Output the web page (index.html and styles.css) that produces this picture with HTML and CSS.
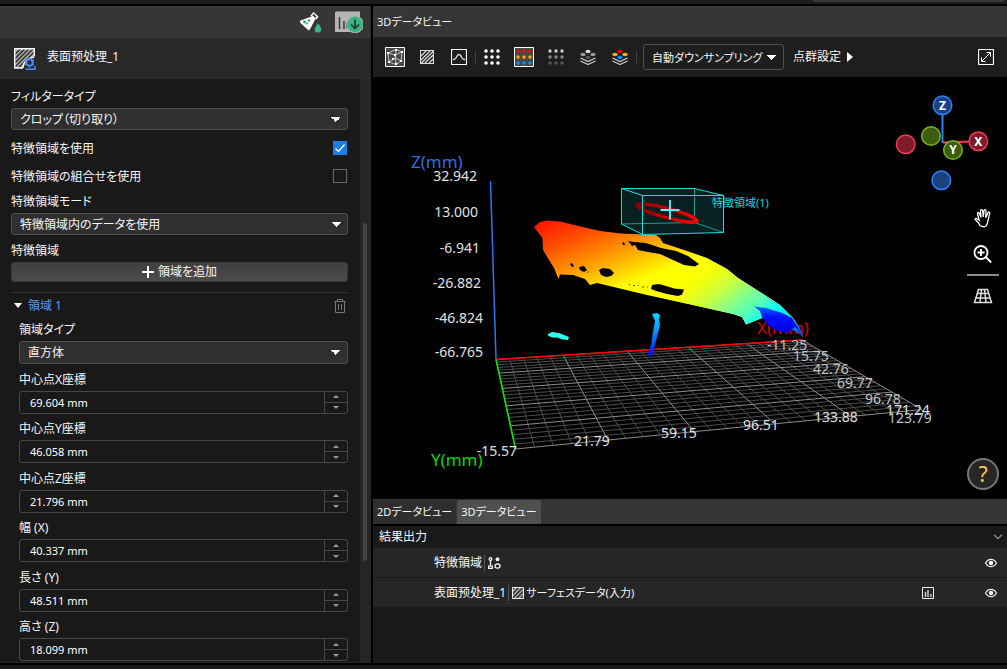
FILE: index.html
```html
<!DOCTYPE html>
<html lang="ja">
<head>
<meta charset="utf-8">
<title>3Dデータビュー</title>
<link rel="stylesheet" href="styles.css">
</head>
<body>
<svg class="defs" aria-hidden="true">
  <defs>
    <pattern id="hatch" width="3" height="3" patternUnits="userSpaceOnUse" patternTransform="rotate(45)"><path d="M.7 0v3" stroke="#e8e8e8" stroke-width="1.100"/></pattern>
    <symbol id="eye" viewBox="0 0 14 12"><path d="M1.500 6Q3.500 2.300 7 2.300T12.500 6Q10.500 9.700 7 9.700T1.500 6Z" fill="none" stroke="#eee" stroke-width="1.200"/><circle cx="7" cy="6" r="2.200" fill="#fff"/></symbol>
  </defs>
</svg>
<div class="app">
  <div class="topstrip"><span class="topstrip-tab"></span></div>
  <main class="main">
    <section class="side">
      <header class="side-head">
        <button class="icon-btn" aria-label="テスト">
          <svg width="24" height="22" viewBox="0 0 24 22"><path d="M12.500 4.500 15.500 1l5 4.500-2 3-1-.800-5.500 10.500-1.500 1.300L2 11.500V9.800L13.500 5.500Z" fill="#fff"/><path d="m15.500 2.800 3 2.700-1 1.500-3-2.500z" fill="#363636"/><circle cx="6.500" cy="11" r="1.400" fill="#2a9f70"/><circle cx="11" cy="9.500" r="1.200" fill="#2a9f70"/><circle cx="9" cy="12.500" r="1" fill="#2a9f70"/><path d="M20 12.500q3.300 4 3.300 5.700a3.300 3.300 0 0 1-6.600 0q0-1.700 3.300-5.700z" fill="#38b888"/></svg>
        </button>
        <button class="icon-btn" aria-label="出力を保存">
          <svg width="28" height="22" viewBox="0 0 28 22"><path d="M0 1.500q0-1 1-1h24V21H0z" fill="#b4b4b4"/><path d="M4.500 6v12M9 10v8M12 12v5" stroke="#363636" stroke-width="1.500"/><circle cx="20" cy="13.500" r="8.700" fill="#b4b4b4"/><circle cx="20" cy="13.500" r="7.900" fill="#39b685"/><path d="M20 8.500v9m-4-4 4 4 4-4" fill="none" stroke="#263c34" stroke-width="1.700"/></svg>
        </button>
      </header>
      <div class="side-title">
        <svg width="22" height="22" viewBox="0 0 22 22"><path d="M1 1h19v8l-8 2-2 9H1z" fill="url(#hatch)"/><path d="M9 20H.700V.700h19.600V8.500M9 20q0-9 11-11" fill="none" stroke="#fff" stroke-width="1.400"/><circle cx="15.500" cy="14.500" r="3.200" fill="#282828" stroke="#4a8cff" stroke-width="2"/><path d="M15.500 9.500v2m0 6v2m-4.300-7.500 1.600 1m5.400 3 1.600 1m0-5-1.600 1m-5.400 3-1.600 1M11.500 21.200H21V18" fill="none" stroke="#4a8cff" stroke-width="1.500"/></svg>
        <h1>表面预处理_1</h1>
      </div>
      <div class="side-body">
        <form class="form">
          <div class="field">
            <label for="ftype">フィルタータイプ</label>
            <select id="ftype"><option>クロップ（切り取り）</option></select>
          </div>
          <div class="checks">
            <div class="check"><label for="useroi">特徴領域を使用</label><input type="checkbox" id="useroi" checked></div>
            <div class="check"><label for="usecombo">特徴領域の組合せを使用</label><input type="checkbox" id="usecombo"></div>
          </div>
          <div class="field">
            <label for="mode">特徴領域モード</label>
            <select id="mode"><option>特徴領域内のデータを使用</option></select>
          </div>
          <div class="field add">
            <span class="caption">特徴領域</span>
            <button type="button" class="add-btn"><svg width="12" height="12" viewBox="0 0 12 12"><path d="M6 0v12M0 6h12" stroke="#fff" stroke-width="2"/></svg>領域を追加</button>
          </div>
          <div class="region-head">
            <button type="button" class="region-toggle"><svg width="8" height="5" viewBox="0 0 8 5"><path d="M0 0h8L4 5z" fill="#fff"/></svg>領域 1</button>
            <button type="button" class="icon-btn" aria-label="削除"><svg width="12" height="14" viewBox="0 0 12 14"><path d="M0 2.500h12M3.500 2.500v-2h5v2M1.500 2.500v11h9v-11M4.500 5v6M7.500 5v6" fill="none" stroke="#777"/></svg></button>
          </div>
          <div class="region">
            <div class="field"><label for="shape">領域タイプ</label><select id="shape"><option>直方体</option></select></div>
            <div class="field"><label for="cx">中心点X座標</label><div class="spin"><input id="cx" value="69.604 mm"><div class="steps"><button type="button" class="up" aria-label="増やす"></button><button type="button" class="down" aria-label="減らす"></button></div></div></div>
            <div class="field"><label for="cy">中心点Y座標</label><div class="spin"><input id="cy" value="46.058 mm"><div class="steps"><button type="button" class="up" aria-label="増やす"></button><button type="button" class="down" aria-label="減らす"></button></div></div></div>
            <div class="field"><label for="cz">中心点Z座標</label><div class="spin"><input id="cz" value="21.796 mm"><div class="steps"><button type="button" class="up" aria-label="増やす"></button><button type="button" class="down" aria-label="減らす"></button></div></div></div>
            <div class="field"><label for="w">幅 (X)</label><div class="spin"><input id="w" value="40.337 mm"><div class="steps"><button type="button" class="up" aria-label="増やす"></button><button type="button" class="down" aria-label="減らす"></button></div></div></div>
            <div class="field"><label for="l">長さ (Y)</label><div class="spin"><input id="l" value="48.511 mm"><div class="steps"><button type="button" class="up" aria-label="増やす"></button><button type="button" class="down" aria-label="減らす"></button></div></div></div>
            <div class="field"><label for="h">高さ (Z)</label><div class="spin"><input id="h" value="18.099 mm"><div class="steps"><button type="button" class="up" aria-label="増やす"></button><button type="button" class="down" aria-label="減らす"></button></div></div></div>
          </div>
        </form>
        <div class="scroll"><span class="thumb"></span></div>
      </div>
    </section>

    <section class="view">
      <h2 class="view-head">3Dデータビュー</h2>
      <div class="toolbar">
        <button class="tool" aria-label="境界ボックス"><svg width="20" height="20" viewBox="0 0 20 20"><path d="M.5.5h19v19H.500z" fill="#484848" stroke="#fff"/><path d="M3 6l8-3.500L17 5l-7 3zM3 6l1 9 7 2.500L10 8M17 5l-1 9-5 3.500M11 2.500 10.500 11 4 15m6.500-4L16 14" fill="none" stroke="#ddd" stroke-width=".8"/><path d="M2 5h2v2H2zM10 2h2v2h-2zM16 4h2v2h-2zM9 7h2v2H9zM3 14h2v2H3zM10 16h2v2h-2zM15 13h2v2h-2zM7 11h2v2H7z" fill="#fff"/></svg></button>
        <button class="tool" aria-label="サーフェス"><svg width="14" height="14" viewBox="0 0 14 14"><path d="M.5.5h13v13H.500zM1 6l5-5M1 10l9-9M1.500 13 13 1.500M5 13l8-8M9 13l4-4" fill="none" stroke="#ddd" stroke-width="1.200"/></svg></button>
        <button class="tool" aria-label="プロファイル"><svg width="16" height="16" viewBox="0 0 16 16"><path d="M.5.5h15v15H.500z" fill="none" stroke="#fff" stroke-width="1.200"/><path d="M2 10.500h1q1.500 0 2.500-2.500T8 5.500t2.500 2.500 2.500 2.500h1" fill="none" stroke="#ddd" stroke-width="1.300"/></svg></button>
        <span class="sep"></span>
        <button class="tool" aria-label="点群 白"><svg width="18" height="18" viewBox="0 0 18 18" fill="none" stroke="#fff" stroke-width="3.600" stroke-linecap="round" stroke-dasharray="0 6"><path d="M3 3h12.100M3 9h12.100M3 15h12.100"/></svg></button>
        <button class="tool" aria-label="点群 高さ"><svg width="20" height="20" viewBox="0 0 20 20" fill="none" stroke-width="3.400" stroke-linecap="round"><path d="M.5.5h19v19H.500z" fill="#484848" stroke="#fff" stroke-width="1" stroke-linecap="butt"/><g stroke-dasharray="0 6"><path d="M4 4h12.100" stroke="#f00"/><path d="M4 10h12.100" stroke="#ffb000"/><path d="M4 16h12.100" stroke="#0094ff"/></g></svg></button>
        <button class="tool" aria-label="点群 輝度"><svg width="18" height="18" viewBox="0 0 18 18" fill="none" stroke-width="3.400" stroke-linecap="round" stroke-dasharray="0 6"><path d="M3 3h12.100" stroke="#ccc"/><path d="M3 9h12.100" stroke="#888"/><path d="M3 15h12.100" stroke="#555"/></svg></button>
        <button class="tool" aria-label="レイヤー 輝度"><svg width="16" height="16" viewBox="0 0 16 16"><path d="m.5 9 7.500 3.500L15.500 9M.500 12 8 15.500 15.500 12" fill="none" stroke="#ccc" stroke-width="1.200"/><ellipse cx="8" cy="2.500" rx="2.500" ry="1.700" fill="#ddd"/><ellipse cx="3" cy="5.500" rx="2.700" ry="1.700" fill="#999"/><ellipse cx="13" cy="5.500" rx="2.700" ry="1.700" fill="#999"/><ellipse cx="8" cy="8.500" rx="2.500" ry="1.700" fill="#555"/></svg></button>
        <button class="tool" aria-label="レイヤー 高さ"><svg width="16" height="16" viewBox="0 0 16 16"><path d="m.5 9 7.500 3.500L15.500 9M.500 12 8 15.500 15.500 12" fill="none" stroke="#ccc" stroke-width="1.200"/><ellipse cx="8" cy="2.500" rx="2.500" ry="1.700" fill="#f00"/><ellipse cx="3" cy="5.500" rx="2.700" ry="1.700" fill="#ffb000"/><ellipse cx="13" cy="5.500" rx="2.700" ry="1.700" fill="#ffb000"/><ellipse cx="8" cy="8.500" rx="2.500" ry="1.700" fill="#0094ff"/></svg></button>
        <span class="sep"></span>
        <select class="sampling" aria-label="サンプリング"><option>自動ダウンサンプリング</option></select>
        <button class="settings">点群設定<svg width="6" height="10" viewBox="0 0 6 10"><path d="M0 0v10l6-5z" fill="#fff"/></svg></button>
        <button class="icon-btn expand" aria-label="拡大"><svg width="16" height="16" viewBox="0 0 16 16"><rect x=".5" y=".5" width="15" height="15" rx="1" fill="none" stroke="#fff" stroke-width="1.200"/><path d="m3.500 12.500 9-9M8.500 3.500h4v4M3.500 8.500v4h4" fill="none" stroke="#fff"/></svg></button>
      </div>

      <div class="canvas">
        <svg class="scene" viewBox="373 77 634 422">
          <defs>
            <linearGradient id="warm" gradientUnits="userSpaceOnUse" x1="547" y1="221" x2="583" y2="309"><stop offset="0" stop-color="#ff1800"/><stop offset=".28" stop-color="#ff5000"/><stop offset=".58" stop-color="#ff9800"/><stop offset=".95" stop-color="#ffff00"/></linearGradient>
            <linearGradient id="cool" gradientUnits="userSpaceOnUse" x1="665" y1="287" x2="743" y2="385"><stop offset="0" stop-color="#ffff00" stop-opacity="0"/><stop offset=".16" stop-color="#f0ff10"/><stop offset=".3" stop-color="#c8ff40"/><stop offset=".46" stop-color="#80ff90"/><stop offset=".58" stop-color="#50ffc0"/><stop offset=".7" stop-color="#00ffff"/><stop offset=".85" stop-color="#00c0ff"/><stop offset=".94" stop-color="#0050ff"/><stop offset="1" stop-color="#0000ff"/></linearGradient>
            <linearGradient id="post" x1="0" y1="0" x2="0" y2="1"><stop offset="0" stop-color="#00d8ff"/><stop offset=".45" stop-color="#0090ff"/><stop offset="1" stop-color="#0000ff"/></linearGradient>
            <linearGradient id="tip" x1="0" y1="0" x2="0" y2="1"><stop offset="0" stop-color="#0068ff"/><stop offset=".4" stop-color="#0010ff"/><stop offset="1" stop-color="#0000e0"/></linearGradient>
            <linearGradient id="ring" x1="0" y1="0" x2="1" y2="0"><stop offset="0" stop-color="#8c0000"/><stop offset=".5" stop-color="#c00000"/><stop offset="1" stop-color="#ff0000"/></linearGradient>
          </defs>
          <path class="grid-minor" id="gridMinor"/>
          <path class="grid-major" id="gridMajor"/>
          <path d="M490.500 181 496 359.500" stroke="#2d74f0" stroke-width="1.500"/>
          <path d="M496 359.500 802 340" stroke="#f00" stroke-width="1.500"/>
          <path d="M496 359.500 515.500 449" stroke="#00e800" stroke-width="1.500"/>
          <g class="axis-name">
            <text x="411" y="168" fill="#2e6fdc">Z(mm)</text>
            <text x="431" y="466" fill="#00d800">Y(mm)</text>
            <text x="757" y="334" fill="#d80000">X(mm)</text>
          </g>
          <g class="tick tick-end">
            <text x="477" y="181">32.942</text><text x="478" y="217">13.000</text><text x="480" y="253">-6.941</text><text x="481" y="288">-26.882</text><text x="483" y="323">-46.824</text><text x="483" y="357">-66.765</text>
            <text x="517" y="456">-15.57</text>
          </g>
          <g class="tick">
            <text x="574" y="446">21.79</text><text x="661" y="438">59.15</text><text x="743" y="430">96.51</text><text x="814" y="422">133.88</text><text x="886" y="415">171.24</text>
          </g>
          <g class="tick tick-far">
            <text x="767" y="350">-11.25</text><text x="793" y="361">15.75</text><text x="813" y="374">42.76</text><text x="837" y="388">69.77</text><text x="865" y="404">96.78</text><text x="888" y="423">123.79</text>
          </g>
          <g id="surface">
            <path d="M534 227 540 222 547 220.500 560 221.500 587 228 600 231 621 233.500 656 235 660 238 663 243 687 251 707 258 727 269 738 278 760 292 780 305 793 318 799 327 803.500 337 797 332 775 320 762 318 746 324.500 742 317 733 314 693 305 647 295 597 283 590 285 585 279 573 275 560 274.500 558.500 279 554 268 543 250 542.500 238Z" fill="url(#warm)"/>
            <path d="M640 236 656 235 660 238 663 243 687 251 707 258 727 269 738 278 760 292 780 305 793 318 799 327 803.500 337 797 332 775 320 762 318 746 324.500 742 317 733 314 693 305 640 293Z" fill="url(#cool)"/>
            <path d="M754 306.500 766 308 781 312.500 792 318 800 331 795 327 788 333 778 331 768 325 762 317 760 311Z" fill="url(#tip)"/>
            <path d="M627 241 634 242 646 243 661 248 676 251 688 256 699 264 695 266.500 684 265 673 260 660 254 648 252 638 250 635 245 632 246 629 242ZM652 285l7-1 7 2 8 2.500 10 1-2 5-4 1.500-11-2-11-3-5-2zM599 270l4-2 7 1 4 4-3 3-5 1-5-2zM579 267l5-1 3 4-3 2-4-2zM570 264l2-1 2 3-2 1zM622 243l2-1 1 3-2 0z" fill="#000"/>
            <path d="M629 284.500h1m3 1h2m3 0h1m3 1.500h2m3 0h1M587 272h2" stroke="#554c00"/>
          </g>
          <path d="m652 314 5-1 3 2-1 5 1 5-3 12-4 16-3 4-2-3 3-9 2-13 2-11z" fill="url(#post)"/>
          <path d="m548 334 4-2 7 1 5 2 5 2-1 3-5-.500-6-2-5 0-4-2z" fill="#28fff0"/>
          <path d="M621.500 188.500h73l29 7v37l-81 2-21-10.500z" fill="#1c8080" fill-opacity=".26"/>
          <path d="m621.500 224 73-1.500 29 10M694.500 188.500v34" fill="none" stroke="#159e9e"/>
          <ellipse cx="667" cy="213" rx="31" ry="4.500" transform="rotate(15 667 213)" fill="none" stroke="url(#ring)" stroke-width="3.500"/>
          <path d="M621.500 188.500h73l29 7h-81zM621.500 188.500V224l21 10.500v-39m0 39 81-2v-37" fill="none" stroke="#18dede"/>
          <path d="M670 200v19.500M660.500 210h19" stroke="#50ffff" stroke-width="1.800"/>
          <text class="roi" x="712" y="207">特徴領域(1)</text>
        </svg>
        <div class="overlay">
          <svg class="gizmo" width="96" height="98" viewBox="894 94 96 98" stroke-width="1.500">
            <path d="M943 142.500 978 141.300" stroke="#ff3c5a" stroke-width="2"/>
            <circle cx="931" cy="136" r="9.300" fill="#3d5c10" stroke="#78b41c"/>
            <path d="M942.500 105v38" stroke="#2f80ff" stroke-width="2"/>
            <circle cx="905.700" cy="144.300" r="9.300" fill="#7f1c2c" stroke="#f23c58"/>
            <circle cx="941.300" cy="180.300" r="9.300" fill="#1b427f" stroke="#2f80ff"/>
            <circle cx="942.500" cy="105.300" r="9.300" fill="#1b427f" stroke="#2f80ff"/>
            <circle cx="978.300" cy="141.300" r="9.300" fill="#7f1c2c" stroke="#f23c58"/>
            <circle cx="953" cy="150" r="9.300" fill="#3d5c10" stroke="#78b41c"/>
            <text x="942.500" y="109.500">Z</text><text x="978.300" y="145.500">X</text><text x="953" y="154">Y</text>
          </svg>
          <div class="tools">
            <button class="tool" aria-label="移動"><svg width="20" height="20" viewBox="0 0 20 20"><path d="M7 17.500 5.500 15 2.200 11.500q-.5-1.300 1-1.200l3 2L4.500 6q-.2-1.400.7-1.500.9 0 1.300 1.300L8 9.500 7.500 3q0-1.400 1-1.400t1.200 1.300l.5 6 .8-6.200q.3-1.200 1.200-1t.8 1.500L12.700 9.700l2.200-5q.5-1 1.300-.6t.4 1.500L15 12.500q-.3 3.500-2 5.500-1.500 1-3.500.7Z" fill="none" stroke="#fff" stroke-width="1.300"/></svg></button>
            <button class="tool" aria-label="ズーム"><svg width="20" height="20" viewBox="0 0 20 20"><circle cx="8" cy="8.500" r="6.500" fill="none" stroke="#fff" stroke-width="1.800"/><path d="M8 5v7M4.500 8.500h7M12.700 13l5.500 5.500" stroke="#fff" stroke-width="1.900"/></svg></button>
            <span class="rule"></span>
            <button class="tool" aria-label="透視投影"><svg width="20" height="16" viewBox="0 0 20 16"><path d="M5.500 1.500h9l4 13h-17zM4.300 5.500h11.400M3 10h14M8.500 1.500 7 14.500M11.500 1.500l1.500 13" fill="none" stroke="#ddd" stroke-width="1.500"/></svg></button>
          </div>
        </div>
        <button class="help">?</button>
      </div>

      <nav class="tabs">
        <button class="tab">2Dデータビュー</button>
        <button class="tab active">3Dデータビュー</button>
      </nav>
      <div class="results">
        <div class="results-head"><span>結果出力</span><svg width="10" height="6" viewBox="0 0 10 6"><path d="m1 .700 4 4 4-4" fill="none" stroke="#999" stroke-width="1.200"/></svg></div>
        <div class="result">
          <span class="src">特徴領域</span>
          <svg width="13" height="12" viewBox="0 0 13 12"><g fill="none" stroke="#fff" stroke-width="1.200"><circle cx="2.500" cy="2" r="1.400"/><path d="M2.500 3.500V9M.700 9h3.600v2.300H.700z"/><ellipse cx="9.500" cy="9" rx="2.600" ry="2.200"/></g><path d="m9.500 0 2.200 2-1 2H8.300l-1-2z" fill="#fff"/></svg>
          <button class="tool end" aria-label="表示"><svg width="14" height="12"><use href="#eye"/></svg></button>
        </div>
        <div class="result">
          <span class="src">表面预处理_1</span>
          <svg width="12" height="12" viewBox="0 0 12 12"><path d="M.5.500h11v11H.500z" fill="url(#hatch)" stroke="#eee"/></svg>
          <span class="name">サーフェスデータ(入力)</span>
          <button class="tool end" aria-label="ヒストグラム"><svg width="12" height="12" viewBox="0 0 12 12"><path d="M.5.500h11v11H.500z" fill="none" stroke="#eee"/><path d="M3.500 5v5M6 3v7M9 7v3" stroke="#ccc" stroke-width="1.500"/></svg></button>
          <button class="tool after" aria-label="表示"><svg width="14" height="12"><use href="#eye"/></svg></button>
        </div>
      </div>
    </section>
  </main>
  <div class="bottomstrip"></div>
</div>
<script src="grid.js"></script>
</body>
</html>
```

FILE: styles.css
```css
* { box-sizing: border-box; }

body {
  margin: 0;
  background: #000;
  color: #f6f6f6;
  font: 12px/18px "Noto Sans", "Noto Sans CJK JP", sans-serif;
  font-feature-settings: "palt";
}

button, select, input { font: inherit; font-feature-settings: inherit; color: inherit; margin: 0; }
button { background: none; border: 0; padding: 0; white-space: nowrap; }
h1, h2 { font-size: 12px; font-weight: 400; margin: 0; }
svg { display: block; flex: none; }
.defs { position: absolute; width: 0; height: 0; }

.app { display: flex; flex-direction: column; height: 100vh; min-height: 600px; gap: 2px; overflow: hidden; }
.topstrip { height: 4px; background: #1b1b1b; display: flex; justify-content: flex-end; padding-right: 3px; }
.topstrip-tab { width: 19%; height: 2px; background: #35353b; }
.bottomstrip { height: 4px; background: #1a1a1a; }
.main { flex: 1; min-height: 0; display: grid; grid-template-columns: minmax(0, 371fr) minmax(0, 634fr); gap: 2px; }

/* parameter panel */
.side { display: flex; flex-direction: column; min-height: 0; background: #191919; border-right: 1px solid #262626; }
.side-head { height: 32px; background: #363636; display: flex; align-items: center; justify-content: flex-end; gap: 13px; padding-right: 7px; }
.side-title { height: 41px; background: #282828; display: flex; align-items: center; gap: 11px; padding-left: 14px; }
.side-title h1 { padding-bottom: 3px; }
.side-body { flex: 1; min-height: 0; display: flex; border-bottom: 1px solid #262626; }
.form { flex: 1; min-width: 0; display: flex; flex-direction: column; padding: 8px 12px 1px 11px; }
.scroll { width: 10px; background: #252525; padding: 144px 3px 0; }
.thumb { display: block; width: 4px; height: 77%; border-radius: 2px; background: #444; }

.field { display: flex; flex-direction: column; gap: 2px; }
label, .caption { padding-top: 1px; }
select {
  appearance: none;
  width: 100%;
  height: 22px;
  padding: 1px 20px 0 8px;
  border: 1px solid #4e4e4e;
  border-radius: 3px;
  background-color: #2f2f2f;
  background-image: linear-gradient(45deg, transparent 50%, #fff 50%), linear-gradient(-45deg, transparent 50%, #fff 50%);
  background-size: 5px 5px;
  background-repeat: no-repeat;
  background-position: right 11px center, right 6px center;
}
.checks { display: flex; flex-direction: column; gap: 10px; padding: 9px 0 7px; }
.check { display: flex; justify-content: space-between; align-items: center; height: 18px; }
.check input { appearance: none; width: 14px; height: 14px; margin-right: 1px; border: 1px solid #6a6a6a; }
.check input:checked {
  border: 0;
  background: #1a7fe0 url("data:image/svg+xml,%3Csvg xmlns='http://www.w3.org/2000/svg' viewBox='0 0 14 14'%3E%3Cpath d='M2.500 7.500 5.500 10.500 11.500 3.500' fill='none' stroke='white' stroke-width='1.300'/%3E%3C/svg%3E");
}
.add { padding-top: 6px; }
.add-btn {
  height: 20px;
  display: flex;
  align-items: center;
  justify-content: center;
  gap: 4px;
  border: 1px solid #3a3a3a;
  border-radius: 3px;
  background: linear-gradient(#3f3f3f, #4b4b4b);
}
.region-head { margin-top: 10px; border-top: 1px solid #303030; padding: 4px 2px 0 3px; height: 22px; display: flex; align-items: center; justify-content: space-between; }
.region-toggle { display: flex; align-items: center; gap: 6px; color: #5c98f0; }
.region { flex: 1; padding: 6px 0 0 8px; display: flex; flex-direction: column; justify-content: space-between; }
.region select { height: 23px; }
.spin { height: 23px; display: flex; border: 1px solid #474747; border-radius: 3px; }
.spin input { flex: 1; min-width: 0; border: 0; outline: 0; background: none; padding: 1px 10px 0; font-size: 11px; color: #fff; }
.steps { width: 23px; display: flex; flex-direction: column; border-left: 1px solid #474747; }
.steps button { flex: 1; display: flex; align-items: center; justify-content: center; }
.steps .up { border-bottom: 1px solid #474747; }
.steps button::before { content: ""; border: 3px solid transparent; border-top: 0; border-bottom: 3px solid #999; }
.steps .down::before { border-bottom: 0; border-top: 3px solid #999; }

/* 3D view */
.view { display: flex; flex-direction: column; min-height: 0; }
.view-head { height: 31px; line-height: 31px; padding-left: 4px; background: #363636; font-size: 11px; }
.toolbar { height: 40px; background: #1e1e1e; display: flex; align-items: center; padding: 0 13px 0 6px; }
.tool { width: 32px; height: 32px; display: flex; align-items: center; justify-content: center; flex: none; }
.sep { width: 1px; height: 12px; background: #444; }
.sampling { width: 141px; height: 26px; margin-left: 6px; padding-right: 16px; font-size: 11px; background-color: #1e1e1e; border-color: #505050; }
.settings { display: flex; align-items: center; gap: 6px; margin-left: 9px; }
.expand { margin-left: auto; }

.canvas { position: relative; flex: 1; min-height: 0; background: #000; }
.scene { width: 100%; height: 100%; }
.grid-minor { fill: none; stroke: #4c4c4c; }
.grid-major { fill: none; stroke: #8c8c8c; }
.axis-name { font-size: 17px; }
.tick { font-size: 14px; fill: #e0e0e0; }
.tick-end { text-anchor: end; }
.tick-far { fill: #c4c4c4; }
.roi { font-size: 11px; fill: #00dede; }
.overlay { position: absolute; top: 17px; right: 8px; display: flex; flex-direction: column; align-items: flex-end; gap: 10px; }
.gizmo { margin-right: 9px; }
.gizmo text { font-size: 12px; font-weight: 700; fill: #fff; stroke: none; text-anchor: middle; }
.tools { display: flex; flex-direction: column; gap: 4px; }
.rule { height: 2px; background: #8c8c8c; }
.help { position: absolute; right: 8px; bottom: 9px; width: 32px; height: 32px; border: 2px solid #777; border-radius: 50%; background: #262626; color: #ffc840; font-size: 21px; line-height: 28px; }

.tabs { height: 25px; background: #353535; display: flex; gap: 1px; padding-top: 1px; }
.tab { padding: 0 4px; font-size: 11px; background: #2e2e2e; border-radius: 3px 3px 0 0; }
.tab.active { background: #505050; }
.results { height: 137px; margin-top: 2px; background: #191919; }
.results-head { height: 22px; padding: 0 4px 0 6px; display: flex; align-items: center; justify-content: space-between; }
.result { height: 30px; display: flex; align-items: center; background: #262626; border-bottom: 1px solid #191919; padding-left: 61px; }
.src { border-right: 1px solid #555; padding-right: 2px; margin-right: 3px; line-height: 16px; }
.name { font-size: 11px; margin-left: 2px; }
.end { margin-left: auto; }
.after { margin-left: 31px; }
```

FILE: grid.js
```js
// Floor grid: maps the unit square onto the floor's perspective quad.
const [x0, y0, x1, y1, x2, y2, x3, y3] = [496, 359.5, 802, 340, 922, 409.5, 515.5, 449];
const dx1 = x1 - x2, dx2 = x3 - x2, sx = x0 - x1 + x2 - x3;
const dy1 = y1 - y2, dy2 = y3 - y2, sy = y0 - y1 + y2 - y3;
const det = dx1 * dy2 - dx2 * dy1;
const g = (sx * dy2 - dx2 * sy) / det;
const h = (dx1 * sy - sx * dy1) / det;
const a = x1 - x0 + g * x1, b = x3 - x0 + h * x3;
const d = y1 - y0 + g * y1, e = y3 - y0 + h * y3;

function project(u, v) {
  const w = g * u + h * v + 1;
  return ((a * u + b * v + x0) / w).toFixed(1) + " " + ((d * u + e * v + y0) / w).toFixed(1);
}

let minor = "", major = "";
for (let i = 0; i <= 25; i++) {
  const t = i / 25;
  const lines = `M${project(t, 0)}L${project(t, 1)}M${project(0, t)}L${project(1, t)}`;
  if (i % 5) minor += lines; else major += lines;
}
document.getElementById("gridMinor").setAttribute("d", minor);
document.getElementById("gridMajor").setAttribute("d", major);
```
